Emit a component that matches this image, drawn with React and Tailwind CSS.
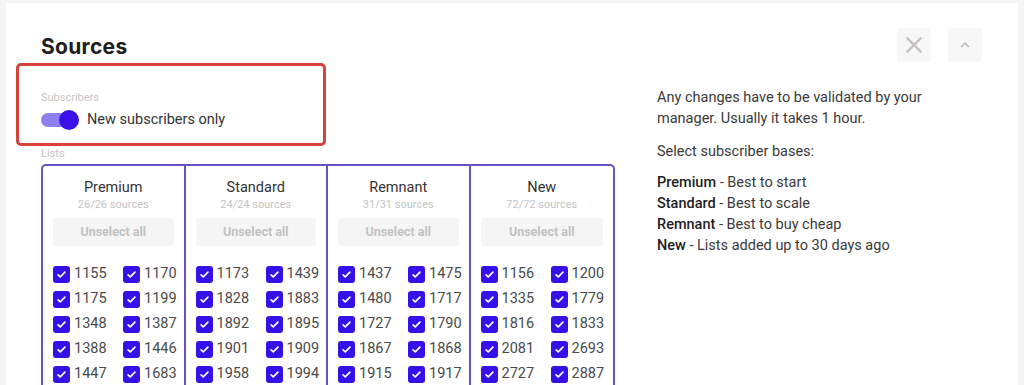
import { MdClose, MdKeyboardArrowUp } from "react-icons/md";

const lists = [
  {
    name: "Premium",
    count: "26/26",
    ids: ["1155", "1170", "1175", "1199", "1348", "1387", "1388", "1446", "1447", "1683"],
  },
  {
    name: "Standard",
    count: "24/24",
    ids: ["1173", "1439", "1828", "1883", "1892", "1895", "1901", "1909", "1958", "1994"],
  },
  {
    name: "Remnant",
    count: "31/31",
    ids: ["1437", "1475", "1480", "1717", "1727", "1790", "1867", "1868", "1915", "1917"],
  },
  {
    name: "New",
    count: "72/72",
    ids: ["1156", "1200", "1335", "1779", "1816", "1833", "2081", "2693", "2727", "2887"],
  },
];

const Check = ({ label }) => (
  <div className="flex items-center gap-[4px] h-[25px]">
    <span className="w-[17px] h-[17px] rounded-[3px] bg-[#3510e8] flex items-center justify-center">
      <svg viewBox="0 0 16 16" className="w-[11px] h-[11px]">
        <path d="M3 8.5l3.2 3L13 4.5" fill="none" stroke="white" strokeWidth="2.4" strokeLinecap="round" strokeLinejoin="round" />
      </svg>
    </span>
    <span className="text-[14.5px] text-[#4a4a4a] leading-none">{label}</span>
  </div>
);

const ListColumn = ({ list, last }) => (
  <div className={`px-[10px] pt-[12px] ${last ? "" : "border-r-2 border-[#6a50c9]"}`}>
    <div className="text-center text-[14.5px] leading-[20px] text-[#333]">{list.name}</div>
    <div className="text-center text-[11px] leading-[14px] text-[#c4c4c4]">{list.count} sources</div>
    <button className="mt-[6px] w-full h-[28px] rounded-[3px] bg-[#f5f5f5] text-[12.5px] font-bold text-[#c2c2c2]">
      Unselect all
    </button>
    <div className="mt-[16px] grid grid-cols-[70px_1fr]">
      {list.ids.map((id) => (
        <Check key={id} label={id} />
      ))}
    </div>
  </div>
);

const App = () => {
  return (
    <div className="h-[385px] overflow-hidden bg-[#f4f4f4] pt-[3px] px-[6px]" style={{ fontFamily: "Roboto, 'Liberation Sans', sans-serif" }}>
      <div className="h-full bg-white pl-[35px] pr-[36px]">
        <div className="flex justify-between items-start pt-[25px]">
          <h1 className="mt-[5px] text-[21px] leading-[28px] font-bold text-[#1e1e1e] tracking-[0.3px]" style={{ fontFamily: "Inter, 'Open Sans', sans-serif" }}>
            Sources
          </h1>
          <div className="flex gap-[17px]">
            <button className="w-[34px] h-[34px] rounded-[3px] bg-[#f7f7f7] flex items-center justify-center">
              <MdClose className="text-[28px] text-[#cbbfbf]" />
            </button>
            <button className="w-[34px] h-[34px] rounded-[3px] bg-[#f7f7f7] flex items-center justify-center">
              <MdKeyboardArrowUp className="text-[18px] text-[#b9b3b3]" />
            </button>
          </div>
        </div>
        <div className="flex">
          <div className="w-[574px] relative">
            <div className="absolute left-[-25px] top-[1px] w-[310px] h-[83px] border-[3px] border-[#d8423c] rounded-[5px]" />
            <div className="mt-[29px] text-[11px] leading-[14px] text-[#c4c4c4]">Subscribers</div>
            <div className="mt-[5px] flex items-center gap-[8px] h-5">
              <div className="relative w-[38px] h-5">
                <span className="absolute left-0 top-[3px] w-[32px] h-[14px] rounded-full bg-[#8e80f1]" />
                <span className="absolute right-0 top-0 w-5 h-5 rounded-full bg-[#3a12ea]" />
              </div>
              <span className="text-[14.5px] text-[#333]">New subscribers only</span>
            </div>
            <div className="mt-[17px] text-[11px] leading-[14px] text-[#c4c4c4]">Lists</div>
            <div className="mt-[3px] grid grid-cols-4 border-2 border-[#6a50c9] rounded-t-[5px] border-b-0 h-[240px]">
              {lists.map((l, i) => (
                <ListColumn key={l.name} list={l} last={i === lists.length - 1} />
              ))}
            </div>
          </div>
          <div className="ml-[42px] mt-[25px] text-[14.5px] leading-[21px] text-[#3a3a3a]">
            <p>Any changes have to be validated by your<br />manager. Usually it takes 1 hour.</p>
            <p className="mt-[12px]">Select subscriber bases:</p>
            <div className="mt-[10px]">
              <p><span className="font-medium text-[#1e1e1e]">Premium</span> - Best to start</p>
              <p><span className="font-medium text-[#1e1e1e]">Standard</span> - Best to scale</p>
              <p><span className="font-medium text-[#1e1e1e]">Remnant</span> - Best to buy cheap</p>
              <p className="leading-[22px]"><span className="font-medium text-[#1e1e1e]">New</span> - Lists added up to 30 days ago</p>
            </div>
          </div>
        </div>
      </div>
    </div>
  );
};

export default App;
